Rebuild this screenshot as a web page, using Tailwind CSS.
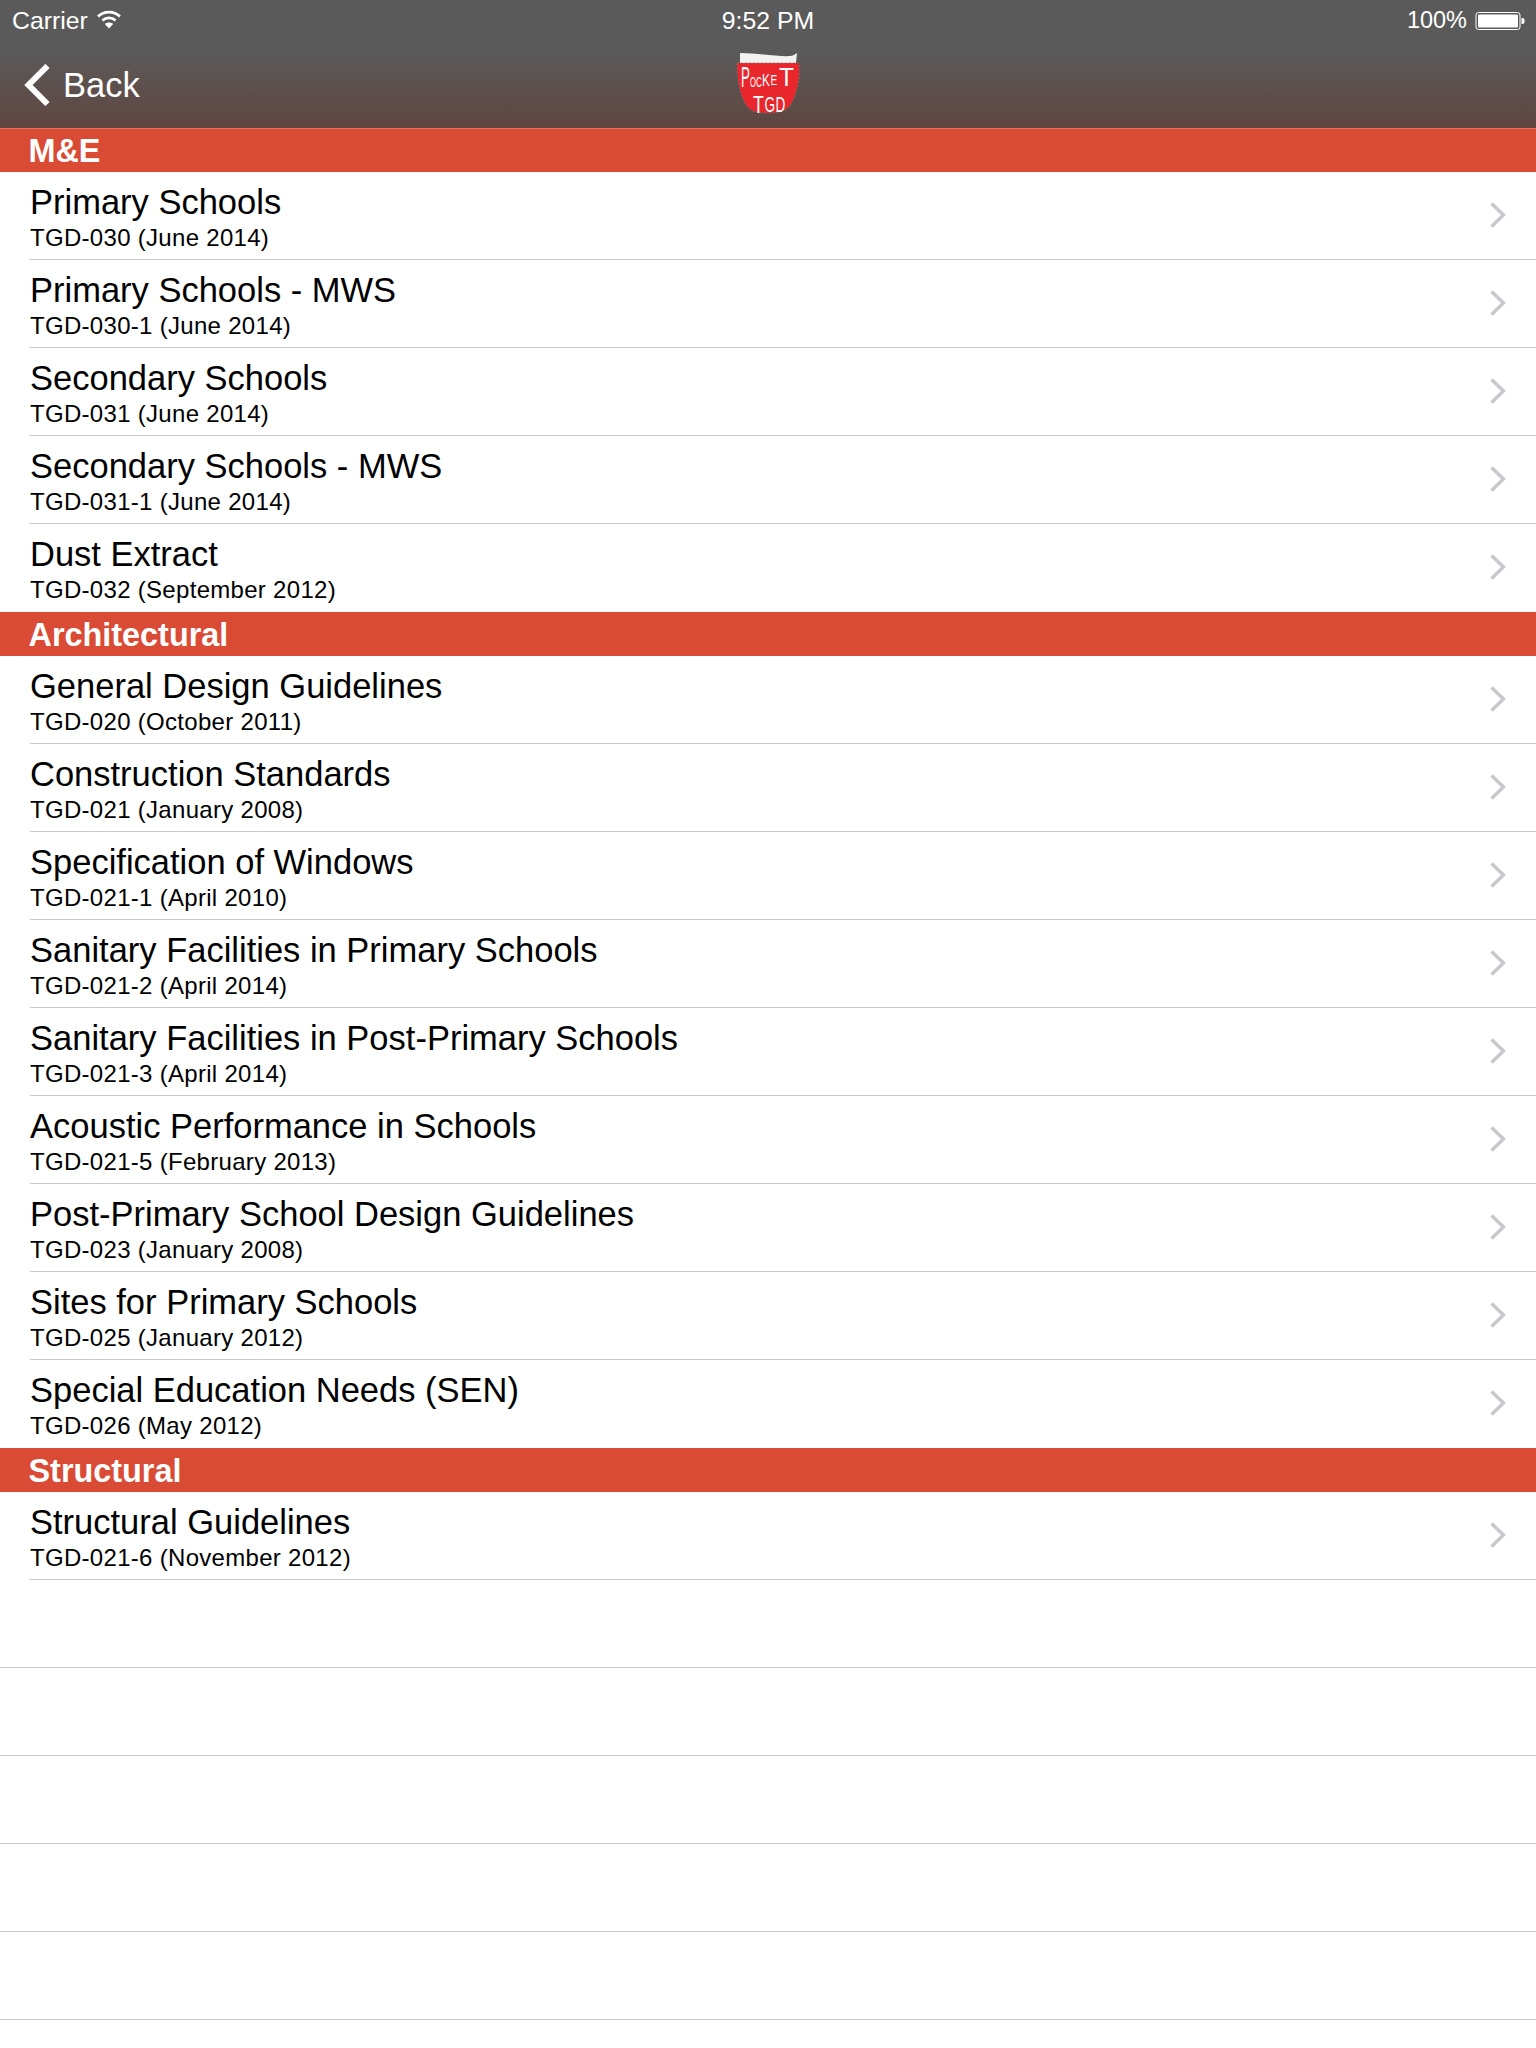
<!DOCTYPE html>
<html lang="en">
<head>
  <meta charset="UTF-8">
  <meta name="viewport" content="width=device-width, initial-scale=1.0">
  <title>Pocket TGD</title>
  <script src="https://cdn.jsdelivr.net/npm/@tailwindcss/browser@4"></script>
</head>
<body class="bg-white font-['Liberation_Sans',Arial,sans-serif] text-black">
  <svg class="hidden">
    <symbol id="chevron" viewBox="0 0 16 26">
      <path d="M1.5 1.5 L13.5 13 L1.5 24.5" fill="none" stroke="#c7c7cc" stroke-width="3.4"/>
    </symbol>
  </svg>

  <div class="w-[1536px] h-[2048px] overflow-hidden">
    <!-- Nav bar -->
    <header class="relative h-[128px] bg-gradient-to-b from-[#5a5a5a] from-40% to-[#5f4540] text-white shadow-[0_1px_0_#e2705d]">
      <div class="relative flex items-center justify-between h-[42px] pl-[12px] pr-[11px] text-[24.8px]">
        <div class="flex items-center gap-[10px]">
          <span>Carrier</span>
          <svg class="-mt-[4px] -ml-[2px]" width="26" height="20" viewBox="0 0 26 20" fill="none" stroke="white" stroke-width="2.6">
            <path d="M2 7.5 C8 1.6 18 1.6 24 7.5"/>
            <path d="M6.5 11.5 C10 8 16 8 19.5 11.5"/>
            <path d="M13 19.5 L8.8 15 C11 13 15 13 17.2 15 Z" fill="white" stroke="none"/>
          </svg>
        </div>
        <span class="absolute left-1/2 -translate-x-1/2">9:52 PM</span>
        <div class="flex items-center gap-[8px]">
          <span class="text-[23.5px]">100%</span>
          <svg width="50" height="20" viewBox="0 0 50 20">
            <rect x="1" y="1.5" width="44" height="17" rx="2.5" fill="none" stroke="white" stroke-width="1"/>
            <rect x="3" y="3.5" width="40" height="13" rx="1" fill="white"/>
            <path d="M46.5 7 h1 a2 2 0 0 1 2 2 v2 a2 2 0 0 1 -2 2 h-1 Z" fill="white"/>
          </svg>
        </div>
      </div>
      <div class="flex items-center h-[86px] pl-[24px]">
        <svg width="26" height="42" viewBox="0 0 26 42" fill="none" stroke="white" stroke-width="6" class="mr-[13px]">
          <path d="M23.5 2 L4.5 21 L23.5 40"/>
        </svg>
        <span class="text-[34.5px] mt-[1px]">Back</span>
      </div>
      <!-- Logo -->
      <svg class="absolute left-[730px] top-[48px]" width="76" height="72" viewBox="0 0 76 72" font-family="Liberation Sans, sans-serif" fill="white">
        <path d="M10 5 C28 5 50 9 60 8 C63 8 65 6 67 5 L66 15 L10 15 Z" fill="#f2f2f2"/>
        <path d="M7 15 H69 C70 30 68 42 62 54 C58 62 52 65 38 65 C24 65 19 62 15 55 C9 44 7 30 7 15 Z" fill="#e8262c" stroke="#777" stroke-width="1" stroke-dasharray="1.5 2.5"/>
        <text font-size="29" transform="translate(11 39) scale(.46 1)">P</text>
        <text font-size="15" transform="translate(20 39) scale(.5 1)">O</text>
        <text font-size="15" transform="translate(26 39) scale(.54 1)">C</text>
        <text font-size="17" transform="translate(32 38) scale(.7 1)">K</text>
        <text font-size="15" transform="translate(40.5 37) scale(.68 1)">E</text>
        <text font-size="26" transform="translate(49 38) scale(.94 1)">T</text>
        <text font-size="24" transform="translate(23 65) scale(.74 1)">T</text>
        <text font-size="22" transform="translate(34.5 64) scale(.62 1)">G</text>
        <text font-size="22" transform="translate(45.5 64) scale(.62 1)">D</text>
      </svg>
    </header>

    <main id="list"></main>
  </div>

  <script>
    const sections = [
      ['M&E', [
        ['Primary Schools', 'TGD-030 (June 2014)'],
        ['Primary Schools - MWS', 'TGD-030-1 (June 2014)'],
        ['Secondary Schools', 'TGD-031 (June 2014)'],
        ['Secondary Schools - MWS', 'TGD-031-1 (June 2014)'],
        ['Dust Extract', 'TGD-032 (September 2012)'],
      ]],
      ['Architectural', [
        ['General Design Guidelines', 'TGD-020 (October 2011)'],
        ['Construction Standards', 'TGD-021 (January 2008)'],
        ['Specification of Windows', 'TGD-021-1 (April 2010)'],
        ['Sanitary Facilities in Primary Schools', 'TGD-021-2 (April 2014)'],
        ['Sanitary Facilities in Post-Primary Schools', 'TGD-021-3 (April 2014)'],
        ['Acoustic Performance in Schools', 'TGD-021-5 (February 2013)'],
        ['Post-Primary School Design Guidelines', 'TGD-023 (January 2008)'],
        ['Sites for Primary Schools', 'TGD-025 (January 2012)'],
        ['Special Education Needs (SEN)', 'TGD-026 (May 2012)'],
      ]],
      ['Structural', [
        ['Structural Guidelines', 'TGD-021-6 (November 2012)'],
      ]],
    ];

    let html = '';
    sections.forEach(([name, rows], s) => {
      html += `<div class="h-[44px] bg-[#d94b35] pl-[28.5px] text-[32.4px] leading-[47px] font-bold text-white">${name.replace('&', '&amp;')}</div>`;
      rows.forEach(([title, sub], r) => {
        // the row right above a section header has no separator
        const noLine = r === rows.length - 1 && s < sections.length - 1;
        html += `
          <div class="flex h-[88px] pl-[30px]">
            <div class="flex-1 flex items-start justify-between ${noLine ? '' : 'border-b border-[#c8c8c8]'}">
              <div class="pt-[10px]">
                <div class="text-[34.5px] leading-[40px]">${title}</div>
                <div class="text-[24px] tracking-[0.3px] leading-[28px] mt-[2px]">${sub}</div>
              </div>
              <svg class="mr-[30px] mt-[30px]" width="16" height="26"><use href="#chevron"></use></svg>
            </div>
          </div>`;
      });
    });
    // Empty table rows below the content
    for (let i = 0; i < 5; i++) {
      html += '<div class="h-[88px] border-b border-[#c8c8c8]"></div>';
    }
    document.getElementById('list').innerHTML = html;
  </script>
</body>
</html>
